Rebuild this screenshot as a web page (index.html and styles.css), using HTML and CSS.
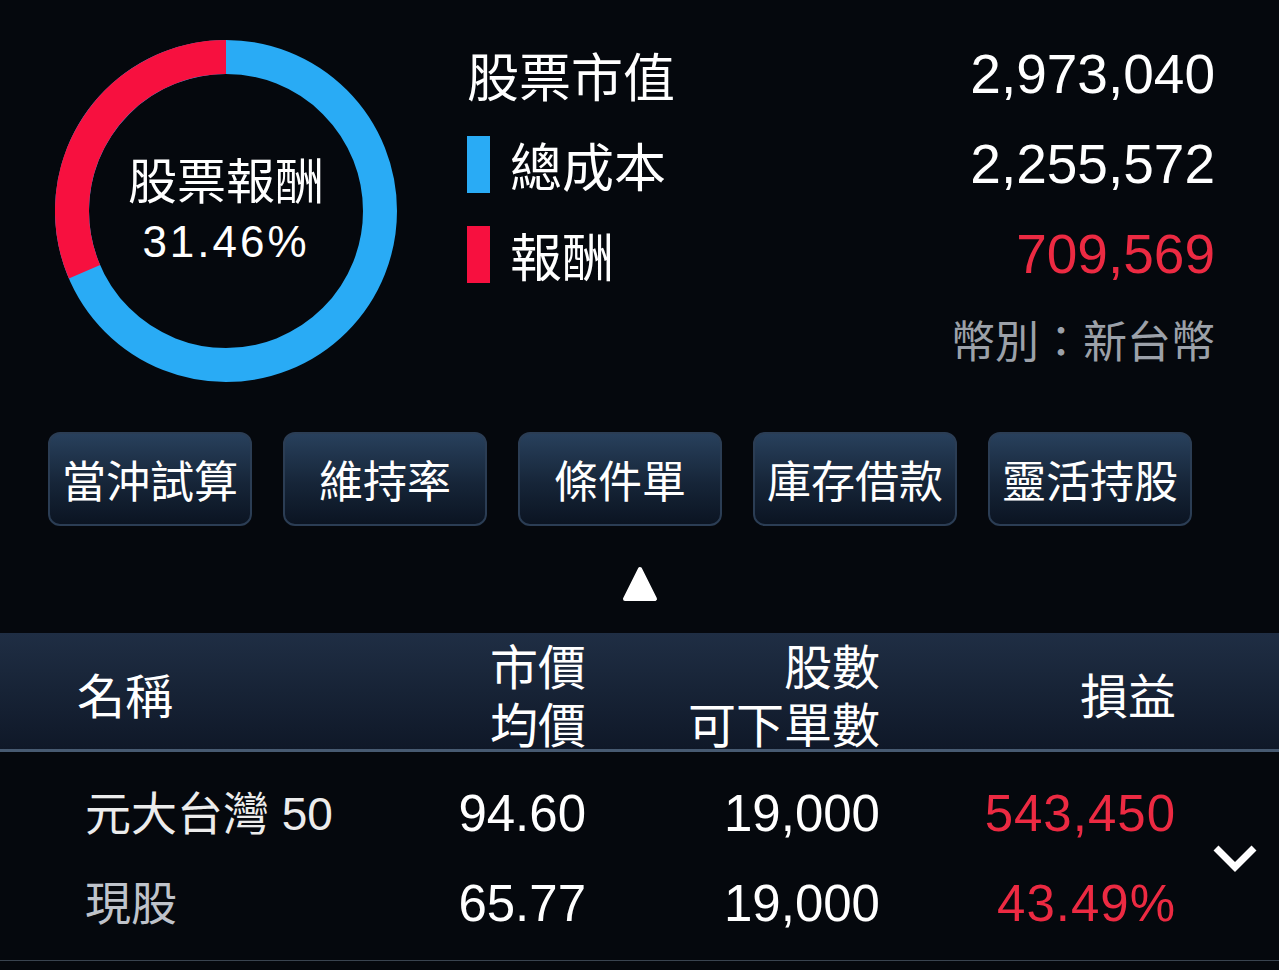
FILE: index.html
```html
<!DOCTYPE html>
<html lang="zh-Hant">
<head>
    <meta charset="UTF-8">
    <meta name="viewport" content="width=device-width, initial-scale=1.0">
    <title>庫存損益</title>
    <link rel="stylesheet" href="styles.css">
</head>
<body>
    <div class="overview">
        <!-- Return ring: blue = cost, red = gain -->
        <div class="donut">
            <svg class="donut-ring" width="342" height="342" viewBox="0 0 342 342">
                <circle cx="171" cy="171" r="154" fill="none" stroke="#29abf5" stroke-width="34"/>
                <path d="M 29.5 231.8 A 154 154 0 0 1 171 17" fill="none" stroke="#f7103f" stroke-width="34"/>
            </svg>
            <div class="donut-label">
                <div>股票報酬</div>
                <div class="donut-pct">31.46%</div>
            </div>
        </div>

        <div class="summary">
            <div class="summary-row">
                <span class="summary-name">股票市值</span>
                <span class="summary-value">2,973,040</span>
            </div>
            <div class="summary-row">
                <span class="summary-name"><i class="swatch swatch-cost"></i>總成本</span>
                <span class="summary-value">2,255,572</span>
            </div>
            <div class="summary-row">
                <span class="summary-name"><i class="swatch swatch-gain"></i>報酬</span>
                <span class="summary-value up">709,569</span>
            </div>
            <div class="currency">幣別：新台幣</div>
        </div>
    </div>

    <div class="actions">
        <button class="action-btn">當沖試算</button>
        <button class="action-btn">維持率</button>
        <button class="action-btn">條件單</button>
        <button class="action-btn">庫存借款</button>
        <button class="action-btn">靈活持股</button>
    </div>

    <div class="toggle">
        <svg width="36" height="36" viewBox="0 0 36 36">
            <polygon points="18,3 33,33 3,33" fill="#fff" stroke="#fff" stroke-width="4" stroke-linejoin="round"/>
        </svg>
    </div>

    <div class="holdings">
        <div class="holdings-head">
            <div class="col-name">名稱</div>
            <div class="col-num">市價<br>均價</div>
            <div class="col-num">股數<br>可下單數</div>
            <div class="col-num">損益</div>
        </div>

        <div class="holdings-body">
            <div class="cell-name">元大台灣 50</div>
            <div class="cell-num">94.60</div>
            <div class="cell-num">19,000</div>
            <div class="cell-num up">543,450</div>
            <div class="cell-more">
                <svg width="48" height="30" viewBox="0 0 48 30">
                    <polyline points="5,5 24,24 43,5" fill="none" stroke="#fff" stroke-width="7"/>
                </svg>
            </div>

            <div class="cell-name cell-sub">現股</div>
            <div class="cell-num">65.77</div>
            <div class="cell-num">19,000</div>
            <div class="cell-num up">43.49%</div>
        </div>
    </div>
</body>
</html>
```

FILE: styles.css
```css
body {
    margin: 0;
    background-color: #05080d;
    color: #ffffff;
    font-family: "Liberation Sans", "Noto Sans CJK TC", sans-serif;
    overflow: hidden;
}

.up {
    color: #ec2a42;
}

/* top: ring + totals */
.overview {
    display: flex;
    padding-top: 29px;
}

.donut {
    display: grid;
    place-items: center;
    width: 342px;
    height: 342px;
    margin: 11px 0 0 55px;
}

.donut-ring,
.donut-label {
    grid-area: 1 / 1;
}

.donut-label {
    text-align: center;
    font-size: 49px;
    line-height: 60px;
    margin-top: 2px;
}

.donut-pct {
    font-size: 44px;
    letter-spacing: 3px;
}

.summary {
    flex: 1;
    margin: 0 64px 0 70px;
}

.summary-row {
    display: flex;
    align-items: center;
    justify-content: space-between;
    height: 90px;
}

.summary-name {
    display: flex;
    align-items: center;
    font-size: 52px;
}

.swatch {
    display: inline-block;
    width: 23px;
    height: 57px;
    margin-right: 20px;
}

.swatch-cost {
    background-color: #29abf5;
}

.swatch-gain {
    background-color: #f7103f;
}

.summary-value {
    font-size: 55px;
}

.currency {
    height: 88px;
    line-height: 88px;
    text-align: right;
    font-size: 44px;
    color: #9ca1a9;
}

/* quick action buttons */
.actions {
    display: flex;
    gap: 31px;
    padding-left: 48px;
    margin-top: 45px;
}

.action-btn {
    width: 204px;
    height: 94px;
    padding: 0;
    border: 2px solid #2b3d54;
    border-radius: 12px;
    background: linear-gradient(to bottom, #28405c 0%, #162538 55%, #0b1422 100%);
    color: #ffffff;
    font-family: inherit;
    font-size: 44px;
    cursor: pointer;
}

.toggle {
    display: flex;
    justify-content: center;
    height: 36px;
    margin-top: 40px;
}

/* holdings table */
.holdings {
    margin-top: 31px;
}

.holdings-head,
.holdings-body {
    display: grid;
    grid-template-columns: 309px 200px 294px 296px 1fr;
    padding-left: 77px;
}

.holdings-head {
    align-items: center;
    box-sizing: border-box;
    height: 119px;
    padding-top: 7px;
    background: linear-gradient(to bottom, #1f2e44 0%, #0f1828 100%);
    border-bottom: 3px solid #475a71;
    font-size: 48px;
    line-height: 58px;
}

.col-num {
    text-align: right;
}

.holdings-body {
    grid-template-rows: 90px 90px;
    align-items: center;
    padding-top: 16px;
    padding-bottom: 12px;
    border-bottom: 1px solid #39434f;
    font-size: 51px;
}

.cell-name {
    padding-left: 8px;
    font-size: 46px;
    margin-top: -6px;
    color: #ececec;
}

.cell-sub {
    color: #bfc3ca;
}

.cell-num {
    text-align: right;
}

.cell-num.up {
    letter-spacing: 1px;
}

.cell-more {
    grid-column: 5;
    grid-row: 1 / span 2;
    justify-self: end;
    margin-right: 20px;
    display: flex;
}
```
